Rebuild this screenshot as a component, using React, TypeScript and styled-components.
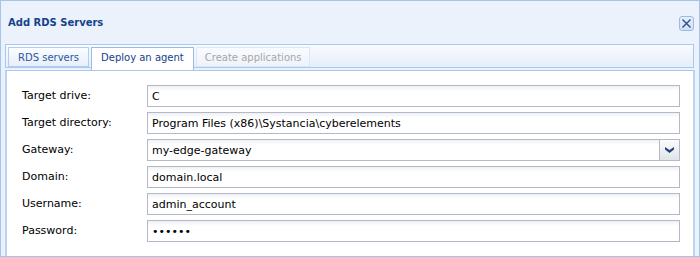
import React from "react";
import styled, { createGlobalStyle, css } from "styled-components";

const Global = createGlobalStyle`
  html, body { margin: 0; padding: 0; }
  body { width: 700px; height: 257px; overflow: hidden; background: #ecf2fb; }
  * { box-sizing: border-box; }
`;

const Window = styled.div`
  width: 700px;
  height: 257px;
  border: 1px solid #a6c3ea;
  background: #ecf2fb;
  display: flex;
  flex-direction: column;
  font-family: "DejaVu Sans", Verdana, sans-serif;
  overflow: hidden;
`;

const Header = styled.div`
  height: 43px;
  flex: none;
  display: flex;
  align-items: center;
  justify-content: space-between;
  padding: 0 5px 0 7px;
`;

const Title = styled.div`
  font-size: 10px;
  font-weight: bold;
  color: #15428b;
`;

const CloseButton = styled.button`
  width: 15px;
  height: 15px;
  margin-top: 2px;
  padding: 0;
  border: 1px solid #99bbe8;
  border-radius: 3px;
  background: linear-gradient(#e6eefa, #d2e0f4);
  display: flex;
  align-items: center;
  justify-content: center;
  svg { display: block; }
`;

const TabStrip = styled.div`
  flex: none;
  margin: 0 5px 0 4px;
  height: 24px;
  border: 1px solid #a9c7ef;
  background: linear-gradient(#f8fbff, #e6eefa);
  display: flex;
  align-items: flex-start;
  gap: 2px;
  padding: 2px 0 0 2px;
`;

type TabKind = "normal" | "active" | "disabled";

const Tab = styled.div<{ $kind: TabKind }>`
  height: 20px;
  padding: 0 9px 0 9px;
  display: flex;
  align-items: center;
  font-size: 10px;
  white-space: nowrap;
  ${({ $kind }) =>
    $kind === "active"
      ? css`
          height: 23px;
          padding-bottom: 3px;
          margin-bottom: -3px;
          position: relative;
          z-index: 1;
          background: #ffffff;
          border: 1px solid #99bbe8;
          border-bottom: none;
          color: #15428b;
        `
      : $kind === "disabled"
      ? css`
          padding: 0 7px 0 8px;
          background: linear-gradient(#f9fbfe, #eef3fb);
          border: 1px solid #dde7f6;
          color: #a7a7a7;
        `
      : css`
          background: linear-gradient(#fbfdff, #e7eff9);
          border: 1px solid #b4cdee;
          color: #2c56a0;
        `}
`;

const Spacer = styled.div`
  flex: none;
  height: 2px;
  margin: 0 4px;
`;

const Panel = styled.div`
  flex: 1;
  margin: 0 4px;
  background: #ffffff;
  border-top: 1px solid #a9c7ef;
  border-left: 2px solid #bcd4f3;
  border-right: 2px solid #bcd4f3;
  padding: 14px 13px 0 15px;
`;

const Form = styled.div`
  display: grid;
  grid-template-columns: 125px 1fr;
  row-gap: 5px;
  align-items: center;
`;

const Label = styled.label`
  font-size: 11px;
  color: #000000;
  line-height: 22px;
`;

const fieldBox = css`
  height: 22px;
  border: 1px solid #b5b8c8;
  background: linear-gradient(#eef1f4 0px, #ffffff 5px, #ffffff 100%);
  font-family: "DejaVu Sans", Verdana, sans-serif;
  font-size: 11px;
  color: #000000;
`;

const TextInput = styled.input`
  ${fieldBox};
  width: 100%;
  padding: 0 4px;
  outline: none;
  margin: 0;
`;

const Combo = styled.div`
  ${fieldBox};
  display: flex;
  align-items: stretch;
`;

const ComboValue = styled.div`
  flex: 1;
  padding: 0 4px;
  display: flex;
  align-items: center;
`;

const ComboTrigger = styled.div`
  width: 20px;
  border-left: 1px solid #b5b8c8;
  background: linear-gradient(#fbfbfc, #e1e4e8);
  display: flex;
  align-items: center;
  justify-content: center;
`;

const fields: { label: string; value: string; kind?: "combo" | "password" }[] = [
  { label: "Target drive:", value: "C" },
  { label: "Target directory:", value: "Program Files (x86)\\Systancia\\cyberelements" },
  { label: "Gateway:", value: "my-edge-gateway", kind: "combo" },
  { label: "Domain:", value: "domain.local" },
  { label: "Username:", value: "admin_account" },
  { label: "Password:", value: "secret", kind: "password" },
];

export default function App() {
  return (
    <>
      <Global />
      <Window>
        <Header>
          <Title>Add RDS Servers</Title>
          <CloseButton aria-label="Close">
            <svg width="11" height="11" viewBox="0 0 11 11">
              <path d="M1.5 1.5 L9.5 9.5 M9.5 1.5 L1.5 9.5" stroke="#2a4f8f" strokeWidth="1.4" />
            </svg>
          </CloseButton>
        </Header>
        <TabStrip>
          <Tab $kind="normal">RDS servers</Tab>
          <Tab $kind="active">Deploy an agent</Tab>
          <Tab $kind="disabled">Create applications</Tab>
        </TabStrip>
        <Spacer />
        <Panel>
          <Form>
            {fields.map((f) => (
              <React.Fragment key={f.label}>
                <Label>{f.label}</Label>
                {f.kind === "combo" ? (
                  <Combo>
                    <ComboValue>{f.value}</ComboValue>
                    <ComboTrigger>
                      <svg width="9" height="6" viewBox="0 0 9 6">
                        <path d="M0 0 L4.5 3 L9 0 L9 2.5 L4.5 6 L0 2.5 Z" fill="#23437c" />
                      </svg>
                    </ComboTrigger>
                  </Combo>
                ) : (
                  <TextInput
                    type={f.kind === "password" ? "password" : "text"}
                    defaultValue={f.value}
                    readOnly
                  />
                )}
              </React.Fragment>
            ))}
          </Form>
        </Panel>
      </Window>
    </>
  );
}
